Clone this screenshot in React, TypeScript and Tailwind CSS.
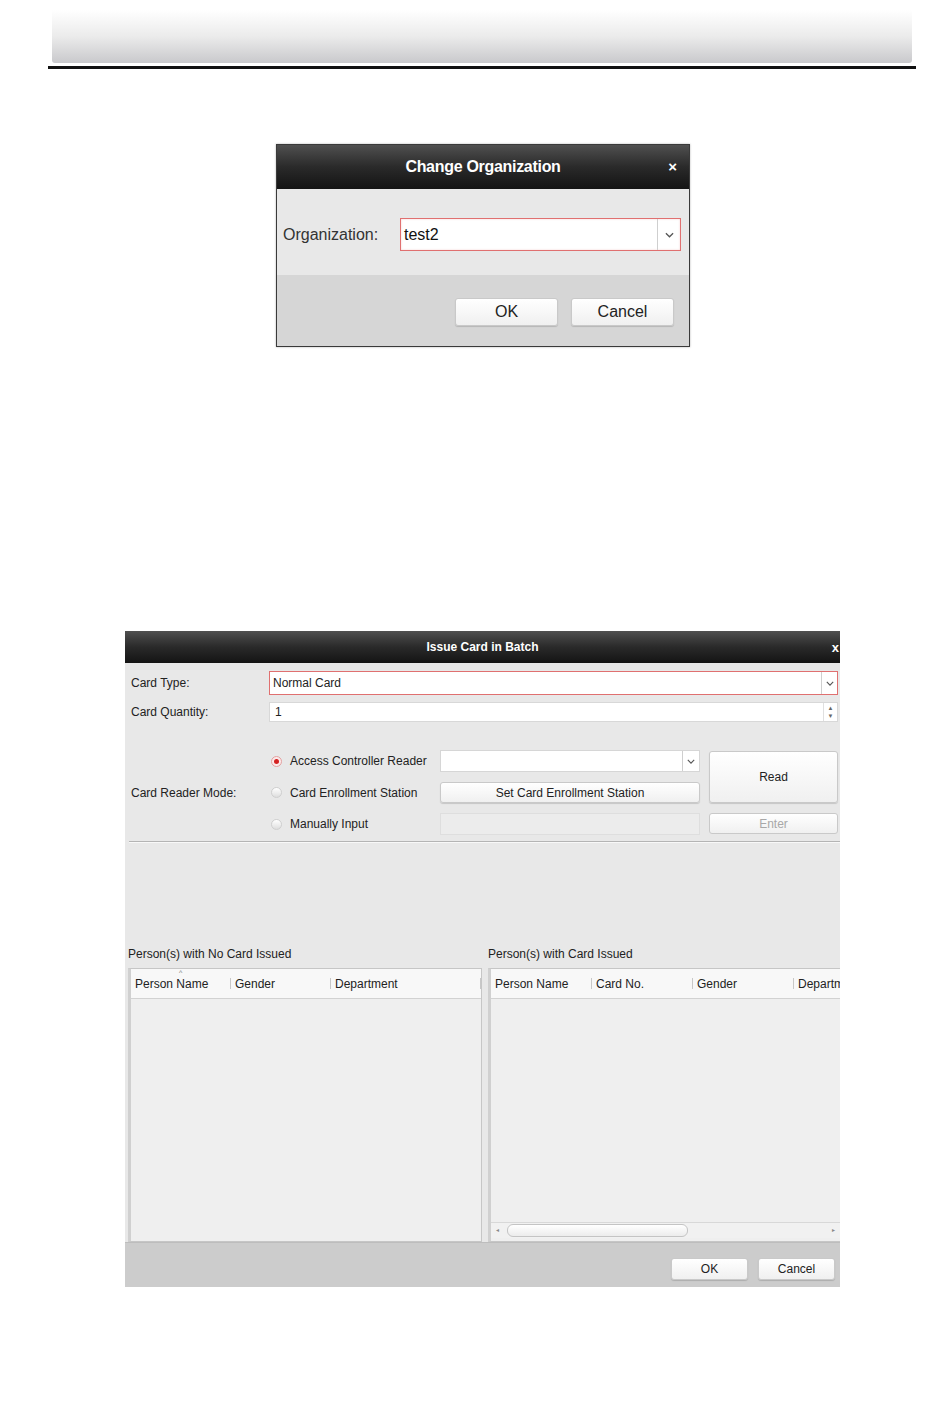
import React from 'react';

const font = { fontFamily: '"Liberation Sans", Arial, sans-serif' };

function Chevron({ className = '' }: { className?: string }) {
  return (
    <svg viewBox="0 0 10 6" className={className} fill="none" stroke="#555" strokeWidth="1.4">
      <path d="M1 1 L5 5 L9 1" />
    </svg>
  );
}

function Radio({ checked }: { checked?: boolean }) {
  return (
    <span
      className={`flex h-[11px] w-[11px] items-center justify-center rounded-full border ${
        checked ? 'border-[#e3a0a0] bg-[#fbe9e9]' : 'border-[#cfcfcf] bg-gradient-to-b from-[#ffffff] to-[#dedede]'
      }`}
    >
      {checked && <span className="h-[5px] w-[5px] rounded-full bg-[#d42020]" />}
    </span>
  );
}

function Btn({ children, className = '', disabled }: { children: React.ReactNode; className?: string; disabled?: boolean }) {
  return (
    <div
      className={`flex items-center justify-center rounded-[3px] border border-[#c9c9c9] bg-gradient-to-b from-[#ffffff] to-[#f0f0f0] shadow-[0_1px_1px_rgba(0,0,0,0.15)] ${
        disabled ? 'text-[#a8a8a8]' : 'text-[#222]'
      } ${className}`}
    >
      {children}
    </div>
  );
}

function HeaderCell({ label, width, first }: { label: string; width: number; first?: boolean }) {
  return (
    <div className="flex shrink-0 items-center whitespace-nowrap" style={{ width }}>
      {!first && <span className="mr-[4px] h-[11px] w-px bg-[#c8c8c8]" />}
      <span className={first ? 'ml-[4px]' : ''}>{label}</span>
    </div>
  );
}

export default function App() {
  return (
    <div className="relative h-[1425px] w-[950px] overflow-hidden bg-white" style={font}>
      {/* Page header */}
      <div className="pt-[10px]">
        <div className="ml-[52px] h-[53px] w-[860px] rounded-b-[3px] bg-gradient-to-b from-[#ffffff] via-[#ebebeb] to-[#c9c9cc]" />
        <div className="ml-[48px] mt-[3px] h-[3px] w-[868px] bg-[#111]" />
      </div>

      {/* Change Organization dialog */}
      <div className="ml-[276px] mt-[75px] w-[414px] border border-[#3a3a3a] shadow-[0_0_2px_rgba(0,0,0,0.3)]">
        <div className="relative flex h-[44px] items-center justify-center bg-gradient-to-b from-[#505050] via-[#2a2a2a] to-[#141414]">
          <span className="text-[16px] font-bold tracking-[-0.3px] text-white">Change Organization</span>
          <span className="absolute right-[12px] top-[11px] text-[15px] font-bold text-white">×</span>
        </div>
        <div className="flex h-[86px] items-center bg-[#e8e8e8] pl-[6px] pt-[5px]">
          <span className="w-[117px] text-[16px] text-[#333]">Organization:</span>
          <div className="flex h-[33px] w-[281px] items-center border border-[#e07070] bg-white shadow-[inset_0_0_2px_rgba(220,80,80,0.3)]">
            <span className="flex-1 pl-[3px] text-[16px] text-[#111]">test2</span>
            <div className="flex h-full w-[23px] items-center justify-center border-l border-[#cfcfcf]">
              <Chevron className="h-[6px] w-[9px]" />
            </div>
          </div>
        </div>
        <div className="flex h-[71px] justify-end gap-[13px] bg-[#d6d6d6] pr-[15px] pt-[23px]">
          <Btn className="h-[28px] w-[103px] text-[16px]">OK</Btn>
          <Btn className="h-[28px] w-[103px] text-[16px]">Cancel</Btn>
        </div>
      </div>

      {/* Issue Card in Batch dialog */}
      <div className="ml-[125px] mt-[284px] w-[715px] text-[12px] text-[#222]">
        <div className="relative flex h-[32px] items-center justify-center bg-gradient-to-b from-[#505050] via-[#2a2a2a] to-[#141414]">
          <span className="font-bold text-white">Issue Card in Batch</span>
          <span className="absolute right-[1px] top-[7px] text-[13px] font-bold text-white">x</span>
        </div>

        <div className="bg-[#e8e8e8]">
          {/* Card Type */}
          <div className="flex items-center pt-[8px] pl-[6px]">
            <span className="w-[138px]">Card Type:</span>
            <div className="flex h-[24px] w-[569px] items-center border border-[#e07070] bg-white">
              <span className="flex-1 pl-[3px]">Normal Card</span>
              <div className="flex h-full w-[16px] items-center justify-center border-l border-[#cfcfcf]">
                <Chevron className="h-[5px] w-[8px]" />
              </div>
            </div>
          </div>
          {/* Card Quantity */}
          <div className="flex items-center pt-[7px] pl-[6px]">
            <span className="w-[138px]">Card Quantity:</span>
            <div className="flex h-[20px] w-[569px] items-center border border-[#d8d8d8] bg-white">
              <span className="flex-1 pl-[5px]">1</span>
              <div className="flex h-full w-[14px] flex-col items-center justify-center border-l border-[#e0e0e0] text-[6px] leading-[8px] text-[#666]">
                <span>▲</span>
                <span>▼</span>
              </div>
            </div>
          </div>

          {/* Card Reader Mode */}
          <div className="flex items-center pl-[6px] pt-[28px] pb-[6px]">
            <span className="w-[140px]">Card Reader Mode:</span>
            <div className="flex flex-col gap-[10px]">
              <div className="flex h-[22px] items-center">
                <Radio checked />
                <span className="ml-[8px] w-[150px]">Access Controller Reader</span>
              </div>
              <div className="flex h-[21px] items-center">
                <Radio />
                <span className="ml-[8px] w-[150px]">Card Enrollment Station</span>
              </div>
              <div className="flex h-[22px] items-center">
                <Radio />
                <span className="ml-[8px] w-[150px]">Manually Input</span>
              </div>
            </div>
            <div className="flex flex-col gap-[10px]">
              <div className="flex h-[22px] w-[260px] items-center border border-[#d6d6d6] bg-white">
                <span className="flex-1" />
                <div className="flex h-full w-[17px] items-center justify-center border-l border-[#cfcfcf]">
                  <Chevron className="h-[5px] w-[8px]" />
                </div>
              </div>
              <Btn className="h-[21px] w-[260px]">Set Card Enrollment Station</Btn>
              <div className="h-[22px] w-[260px] border border-[#dedede] bg-[#ececec]" />
            </div>
            <div className="ml-[9px] flex flex-col gap-[10px]">
              <Btn className="h-[52px] w-[129px]">Read</Btn>
              <Btn disabled className="h-[21px] w-[129px] shadow-none">Enter</Btn>
            </div>
          </div>
          <div className="ml-[4px] h-px bg-[#b4b4b4]" />
          <div className="ml-[4px] h-px bg-[#f8f8f8]" />

          {/* Person tables */}
          <div className="flex gap-[6px] pl-[3px] pt-[104px]">
            <div className="flex w-[354px] flex-col">
              <span className="mb-[7px] h-[14px] leading-[14px]">Person(s) with No Card Issued</span>
              <div className="flex h-[274px] flex-col border border-[#c6c6c6] border-l-[3px] border-l-[#d0d0d0] bg-[#efefef]">
                <div className="relative flex h-[30px] shrink-0 items-center border-b border-[#d2d2d2] bg-[#f8f8f8]">
                  <HeaderCell label="Person Name" width={99} first />
                  <HeaderCell label="Gender" width={100} />
                  <HeaderCell label="Department" width={150} />
                  <span className="h-[11px] w-px bg-[#c8c8c8]" />
                  <span className="absolute left-[48px] top-[-1px] text-[7px] text-[#777]">^</span>
                </div>
              </div>
            </div>
            <div className="flex w-[352px] flex-col">
              <span className="mb-[7px] h-[14px] leading-[14px]">Person(s) with Card Issued</span>
              <div className="flex h-[274px] flex-col overflow-hidden border border-r-0 border-[#c6c6c6] border-l-[3px] border-l-[#d0d0d0] bg-[#efefef]">
                <div className="flex h-[30px] shrink-0 items-center overflow-hidden border-b border-[#d2d2d2] bg-[#f8f8f8]">
                  <HeaderCell label="Person Name" width={100} first />
                  <HeaderCell label="Card No." width={101} />
                  <HeaderCell label="Gender" width={101} />
                  <HeaderCell label="Departm" width={60} />
                </div>
                <div className="flex-1" />
                <div className="mb-[3px] flex h-[16px] items-center border-t border-[#d8d8d8] bg-[#f1f1f1] px-[5px] text-[6px] text-[#888]">
                  <span>◂</span>
                  <div className="ml-[8px] h-[13px] w-[181px] rounded-[6px] border border-[#c4c4c4] bg-gradient-to-b from-[#ffffff] to-[#ececec]" />
                  <span className="flex-1" />
                  <span>▸</span>
                </div>
              </div>
            </div>
          </div>
        </div>

        {/* Footer */}
        <div className="flex h-[45px] justify-end gap-[10px] border-t border-[#bdbdbd] bg-[#cccccc] pr-[5px] pt-[15px]">
          <Btn className="h-[22px] w-[77px]">OK</Btn>
          <Btn className="h-[22px] w-[77px]">Cancel</Btn>
        </div>
      </div>
    </div>
  );
}
